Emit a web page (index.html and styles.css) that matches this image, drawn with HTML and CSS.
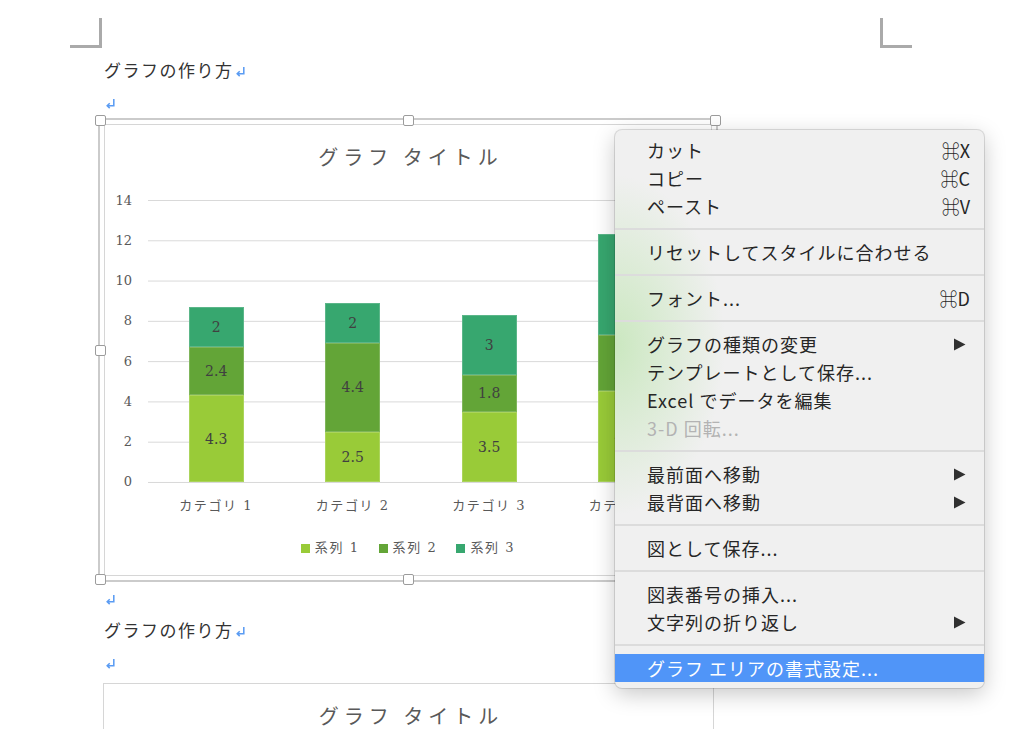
FILE: index.html
```html
<!DOCTYPE html>
<html lang="ja">
<head>
<meta charset="utf-8">
<title>グラフの作り方</title>
<link rel="stylesheet" href="styles.css">
</head>
<body>
<div class="corners"><span class="corner corner-l"></span><span class="corner corner-r"></span></div>
<main class="doc">
  <p class="para">グラフの作り方<svg class="ret" viewBox="0 0 10 10"><path d="M8 1V7H2M4.3 4.8L2 7L4.3 9.2"/></svg></p>
  <p class="para"><svg class="ret" viewBox="0 0 10 10"><path d="M8 1V7H2M4.3 4.8L2 7L4.3 9.2"/></svg></p>
  <div class="sel">
    <span class="handle h-tl"></span><span class="handle h-tm"></span><span class="handle h-tr"></span>
    <span class="handle h-ml"></span><span class="handle h-mr"></span>
    <span class="handle h-bl"></span><span class="handle h-bm"></span><span class="handle h-br"></span>
    <div class="chart">
      <div class="chart-title">グラフ タイトル</div>
      <div class="plot">
        <div class="axis">
          <span>14</span><span>12</span><span>10</span><span>8</span><span>6</span><span>4</span><span>2</span><span>0</span>
        </div>
        <div class="grid">
          <div class="cat"><div class="bar">
            <div class="seg s1" style="height:86.6px">4.3</div>
            <div class="seg s2" style="height:48.3px">2.4</div>
            <div class="seg s3" style="height:40.3px">2</div>
          </div></div>
          <div class="cat"><div class="bar">
            <div class="seg s1" style="height:50.4px">2.5</div>
            <div class="seg s2" style="height:88.6px">4.4</div>
            <div class="seg s3" style="height:40.3px">2</div>
          </div></div>
          <div class="cat"><div class="bar">
            <div class="seg s1" style="height:70.5px">3.5</div>
            <div class="seg s2" style="height:36.3px">1.8</div>
            <div class="seg s3" style="height:60.4px">3</div>
          </div></div>
          <div class="cat"><div class="bar">
            <div class="seg s1" style="height:90.6px">4.5</div>
            <div class="seg s2" style="height:56.4px">2.8</div>
            <div class="seg s3" style="height:100.7px">5</div>
          </div></div>
        </div>
      </div>
      <div class="xlabels"><span>カテゴリ 1</span><span>カテゴリ 2</span><span>カテゴリ 3</span><span>カテゴリ 4</span></div>
      <div class="legend">
        <span class="legend-item"><i class="swatch s1"></i>系列 1</span>
        <span class="legend-item"><i class="swatch s2"></i>系列 2</span>
        <span class="legend-item"><i class="swatch s3"></i>系列 3</span>
      </div>
    </div>
  </div>
  <p class="para"><svg class="ret" viewBox="0 0 10 10"><path d="M8 1V7H2M4.3 4.8L2 7L4.3 9.2"/></svg></p>
  <p class="para">グラフの作り方<svg class="ret" viewBox="0 0 10 10"><path d="M8 1V7H2M4.3 4.8L2 7L4.3 9.2"/></svg></p>
  <p class="para"><svg class="ret" viewBox="0 0 10 10"><path d="M8 1V7H2M4.3 4.8L2 7L4.3 9.2"/></svg></p>
  <div class="chart chart-2">
    <div class="chart-title">グラフ タイトル</div>
  </div>
</main>

<div class="menu">
  <div class="item"><span>カット</span><span class="key">⌘X</span></div>
  <div class="item"><span>コピー</span><span class="key">⌘C</span></div>
  <div class="item"><span>ペースト</span><span class="key">⌘V</span></div>
  <div class="sep"></div>
  <div class="item"><span>リセットしてスタイルに合わせる</span></div>
  <div class="sep"></div>
  <div class="item"><span>フォント...</span><span class="key">⌘D</span></div>
  <div class="sep"></div>
  <div class="item"><span>グラフの種類の変更</span><svg class="arrow" viewBox="0 0 13 13"><path d="M1 0.5L12.5 6.5L1 12.5Z"/></svg></div>
  <div class="item"><span>テンプレートとして保存...</span></div>
  <div class="item"><span>Excel でデータを編集</span></div>
  <div class="item disabled"><span>3-D 回転...</span></div>
  <div class="sep"></div>
  <div class="item"><span>最前面へ移動</span><svg class="arrow" viewBox="0 0 13 13"><path d="M1 0.5L12.5 6.5L1 12.5Z"/></svg></div>
  <div class="item"><span>最背面へ移動</span><svg class="arrow" viewBox="0 0 13 13"><path d="M1 0.5L12.5 6.5L1 12.5Z"/></svg></div>
  <div class="sep"></div>
  <div class="item"><span>図として保存...</span></div>
  <div class="sep"></div>
  <div class="item"><span>図表番号の挿入...</span></div>
  <div class="item"><span>文字列の折り返し</span><svg class="arrow" viewBox="0 0 13 13"><path d="M1 0.5L12.5 6.5L1 12.5Z"/></svg></div>
  <div class="sep"></div>
  <div class="item active"><span>グラフ エリアの書式設定...</span></div>
</div>
</body>
</html>
```

FILE: styles.css
```css
html, body {
  margin: 0;
  height: 100%;
  overflow: hidden;
  background: #ffffff;
}

body {
  font-family: "Noto Sans CJK JP", "Noto Sans", sans-serif;
  color: #333333;
  position: relative;
}

/* page corner marks */
.corners {
  display: flex;
  justify-content: space-between;
  width: 842px;
  height: 30px;
  margin: 18px 0 0 70px;
}

.corner {
  width: 29px;
  height: 27px;
  border-bottom: 3px solid #aaaaaa;
}

.corner-l { border-right: 3px solid #aaaaaa; }
.corner-r { border-left: 3px solid #aaaaaa; }

/* document body */
.doc {
  margin: 6px 0 0 102px;
  width: 612px;
}

.para {
  margin: 0;
  height: 32px;
  line-height: 32px;
  font-size: 17px;
  letter-spacing: 1.5px;
  padding-left: 2px;
  color: #333333;
  white-space: nowrap;
}

.ret {
  width: 11px;
  height: 11px;
  margin-left: 1px;
  vertical-align: baseline;
  fill: none;
  stroke: #5b9cf3;
  stroke-width: 1.4;
}

/* selected chart */
.sel {
  position: relative;
  margin-left: -4px;
  width: 620px;
  height: 464px;
  box-sizing: border-box;
  border: 2px solid #cbcbcb;
  padding: 4px;
}

.handle {
  position: absolute;
  width: 9px;
  height: 9px;
  background: #ffffff;
  border: 1px solid #9c9c9c;
  border-radius: 2px;
}

.h-tl { left: -5px; top: -5px; }
.h-tm { left: calc(50% - 5.5px); top: -5px; }
.h-tr { right: -5px; top: -5px; }
.h-ml { left: -5px; top: calc(50% - 5.5px); }
.h-mr { right: -5px; top: calc(50% - 5.5px); }
.h-bl { left: -5px; bottom: -5px; }
.h-bm { left: calc(50% - 5.5px); bottom: -5px; }
.h-br { right: -5px; bottom: -5px; }

.chart {
  box-sizing: border-box;
  height: 452px;
  border: 1px solid #d6d6d6;
  background: #ffffff;
  font-family: "DejaVu Serif", "Noto Sans CJK JP", serif;
  color: #595959;
}

.chart-2 {
  margin: 5px 0 0 1px;
  width: 611px;
}

.chart-title {
  padding: 20px 0 0 5px;
  line-height: 24px;
  font-size: 20px;
  letter-spacing: 5px;
  text-align: center;
  font-family: "Noto Sans CJK JP", sans-serif;
  color: #595959;
}

.plot {
  display: flex;
  margin-top: 31px;
}

.axis {
  width: 43px;
  box-sizing: border-box;
  padding-right: 16px;
  height: 282px;
  display: flex;
  flex-direction: column;
  justify-content: space-between;
  align-items: flex-end;
  font-size: 13px;
}

.axis span {
  height: 0;
  display: flex;
  align-items: center;
}

.grid {
  width: 546px;
  height: 282px;
  border-bottom: 1px solid #d9d9d9;
  background-image: linear-gradient(to bottom, #d9d9d9 0, #d9d9d9 1px, transparent 1px);
  background-size: 100% 40.2857px;
  display: flex;
  align-items: flex-end;
}

.cat {
  flex: 0 0 136.5px;
  display: flex;
  justify-content: center;
}

.bar {
  width: 55px;
  display: flex;
  flex-direction: column-reverse;
}

.seg {
  display: flex;
  align-items: center;
  justify-content: center;
  font-size: 14px;
  color: #404040;
  box-shadow: inset 0 0 0 1px rgba(255, 255, 255, 0.18);
}

.s1 { background: #99cb38; }
.s2 { background: #63a537; }
.s3 { background: #37a76f; }

.xlabels {
  display: flex;
  margin: 13px 0 0 43px;
  line-height: 20px;
  font-size: 13px;
  letter-spacing: 1.6px;
}

.xlabels span {
  flex: 0 0 136.5px;
  text-align: center;
}

.legend {
  display: flex;
  justify-content: center;
  gap: 19px;
  margin-top: 22px;
  line-height: 20px;
  font-size: 13px;
  letter-spacing: 1.6px;
}

.legend-item {
  display: flex;
  align-items: center;
  gap: 5px;
}

.swatch {
  display: block;
  width: 9px;
  height: 9px;
}

/* context menu */
.menu {
  position: absolute;
  left: 615px;
  top: 130px;
  width: 369px;
  box-sizing: border-box;
  padding: 6px 0;
  border-radius: 7px;
  background:
    radial-gradient(ellipse 110px 170px at 0 215px, rgba(178, 226, 160, 0.6), rgba(200, 232, 190, 0) 100%),
    #f0f0f0;
  box-shadow: 0 0 0 1px rgba(0, 0, 0, 0.12), 0 6px 22px rgba(0, 0, 0, 0.22);
  font-family: "Noto Sans CJK JP", "DejaVu Sans", sans-serif;
  font-size: 18px;
  letter-spacing: 1px;
  color: #262626;
  overflow: hidden;
}

.item {
  display: flex;
  justify-content: space-between;
  align-items: center;
  height: 28px;
  padding: 0 14px 0 32px;
  white-space: nowrap;
}

.key {
  letter-spacing: 0;
}

.arrow {
  width: 13px;
  height: 13px;
  margin-right: 4px;
  fill: #303030;
}

.item.disabled { color: #b3b3b3; }

.item.active {
  background: #5095f8;
  color: #ffffff;
}

.sep {
  height: 2px;
  margin: 8px 0;
  background: #dcdcdc;
}
```
